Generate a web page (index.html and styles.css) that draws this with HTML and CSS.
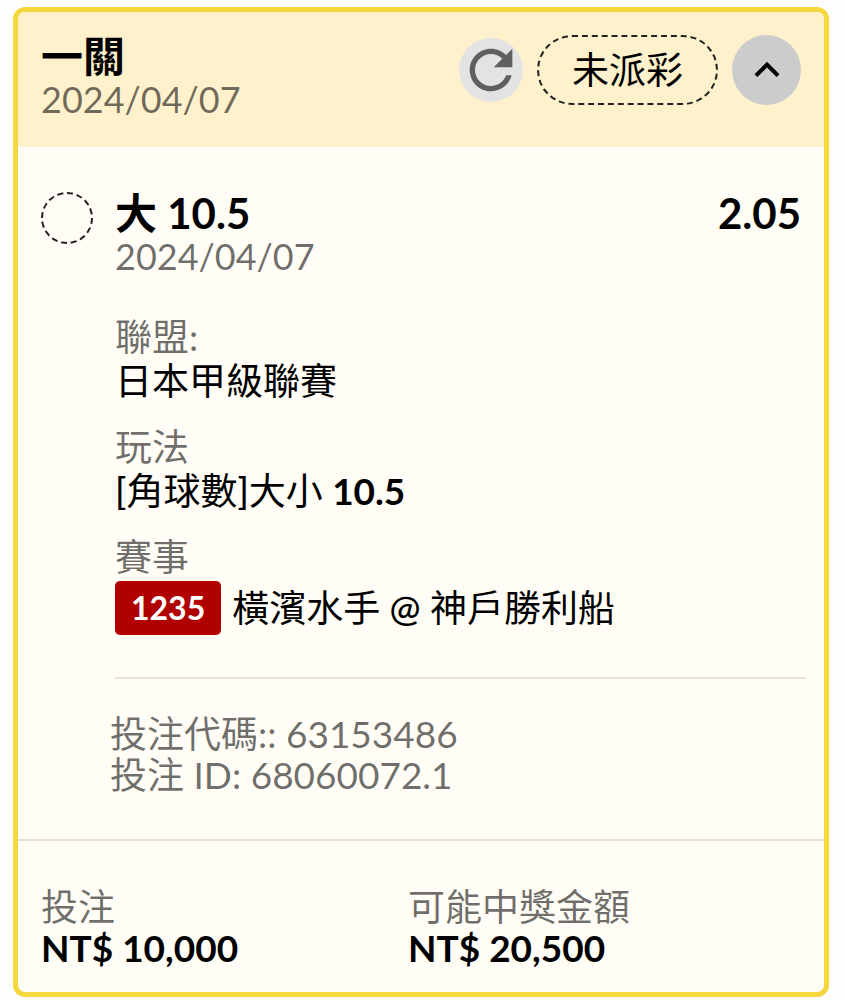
FILE: index.html
```html
<!DOCTYPE html>
<html lang="zh-Hant">
<head>
    <meta charset="UTF-8">
    <meta name="viewport" content="width=device-width, initial-scale=1.0">
    <title>一關</title>
    <link rel="stylesheet" href="styles.css">
</head>
<body>

    <main class="bet-card">
        <header class="bet-header">
            <div class="bet-heading">
                <h1 class="title">一關</h1>
                <div class="date">2024/04/07</div>
            </div>
            <div class="actions">
                <button class="refresh" type="button" aria-label="重新整理">
                    <svg viewBox="0 0 24 24" aria-hidden="true"><path d="M17.65 6.35C16.2 4.9 14.21 4 12 4c-4.42 0-7.99 3.58-7.99 8s3.57 8 7.99 8c3.73 0 6.84-2.55 7.73-6h-2.08c-.82 2.33-3.04 4-5.65 4-3.31 0-6-2.69-6-6s2.69-6 6-6c1.66 0 3.14.69 4.22 1.78L13 11h7V4l-2.35 2.35z"/></svg>
                </button>
                <span class="status">未派彩</span>
                <button class="toggle" type="button" aria-label="收合" aria-expanded="true">
                    <svg viewBox="0 0 24 24" aria-hidden="true"><path d="M12 8l-6 6 1.41 1.41L12 10.83l4.59 4.58L18 14z"/></svg>
                </button>
            </div>
        </header>

        <section class="bet-body">
            <span class="result-mark"></span>
            <div class="selection">
                <div class="selection-top">
                    <h2 class="title">大 10.5</h2>
                    <span class="title">2.05</span>
                </div>
                <div class="date">2024/04/07</div>

                <dl class="details">
                    <div>
                        <dt>聯盟:</dt>
                        <dd>日本甲級聯賽</dd>
                    </div>
                    <div>
                        <dt>玩法</dt>
                        <dd>[角球數]大小 <strong>10.5</strong></dd>
                    </div>
                    <div>
                        <dt>賽事</dt>
                        <dd class="match"><span class="match-code">1235</span><span>橫濱水手 @ 神戶勝利船</span></dd>
                    </div>
                </dl>
            </div>
        </section>

        <section class="bet-codes">
            <div>投注代碼:: 63153486</div>
            <div>投注 ID: 68060072.1</div>
        </section>

        <footer class="bet-footer">
            <div>
                <div class="label">投注</div>
                <div class="amount">NT$ 10,000</div>
            </div>
            <div>
                <div class="label">可能中獎金額</div>
                <div class="amount">NT$ 20,500</div>
            </div>
        </footer>
    </main>

</body>
</html>
```
FILE: styles.css
```css
* {
    box-sizing: border-box;
}

body {
    margin: 0;
    padding: 7px 16px 4px 13px;
    background-color: #fefefe;
    color: #000;
    font-family: Lato, "Noto Sans CJK TC", sans-serif;
    font-size: 37px;
    line-height: 44px;
}

h1, h2, dl, dd {
    margin: 0;
}

.bet-card {
    background-color: #fffdf5;
    border: 5px solid #f6d63d;
    border-radius: 12px;
    overflow: hidden;
}

.bet-header {
    display: flex;
    justify-content: space-between;
    align-items: flex-start;
    padding: 23px 23px 26px;
    background-color: #fff1cc;
}

.title {
    font-size: 42px;
    font-weight: 700;
    line-height: 43px;
}

.date {
    font-size: 36px;
    line-height: 43px;
}

.date, dt, .label, .bet-codes {
    color: rgba(0, 0, 0, 0.57);
}

.actions {
    display: flex;
    align-items: center;
    gap: 14px;
}

button {
    display: flex;
    align-items: center;
    justify-content: center;
    padding: 0;
    border: none;
    border-radius: 50%;
    cursor: pointer;
}

.refresh {
    width: 64px;
    height: 64px;
    background-color: #e3e3e4;
}

.refresh svg {
    width: 64px;
    height: 64px;
    fill: #5f6062;
}

.toggle {
    width: 69px;
    height: 70px;
    background-color: #cdcccd;
}

.toggle svg {
    width: 50px;
    height: 50px;
    fill: #000;
}

.status {
    padding: 11px 33px;
    border: 2px dashed #222;
    border-radius: 35px;
}

.bet-body {
    display: flex;
    gap: 22px;
    padding: 45px 23px 0;
}

/* empty until the bet is settled */
.result-mark {
    flex: none;
    width: 52px;
    height: 52px;
    border: 2px dashed #222;
    border-radius: 50%;
}

.selection {
    flex: 1;
}

.selection-top {
    display: flex;
    justify-content: space-between;
}

.details {
    display: grid;
    gap: 22px;
    padding-top: 37px;
}

dd {
    font-family: "Lato Medium", Lato, "Noto Sans CJK TC", sans-serif;
}

dd strong, .match-code {
    font-family: Lato, sans-serif;
    font-weight: 700;
}

.match {
    display: flex;
    align-items: center;
    gap: 11px;
    padding-top: 2px;
}

.match-code {
    padding: 5px 16px;
    background-color: #b00000;
    border-radius: 5px;
    color: #fff;
    font-size: 32px;
}

.bet-codes {
    padding: 78px 23px 44px 92px;
    line-height: 41px;
    background: linear-gradient(#e6e4de, #e6e4de) 97px 42px / calc(100% - 115px) 2px no-repeat;
}

.bet-footer {
    display: grid;
    grid-template-columns: 1fr 1fr;
    padding: 45px 49px 24px 23px;
    border-top: 2px solid #e3e1db;
    line-height: 41px;
}

.amount {
    font-weight: 700;
}
```
